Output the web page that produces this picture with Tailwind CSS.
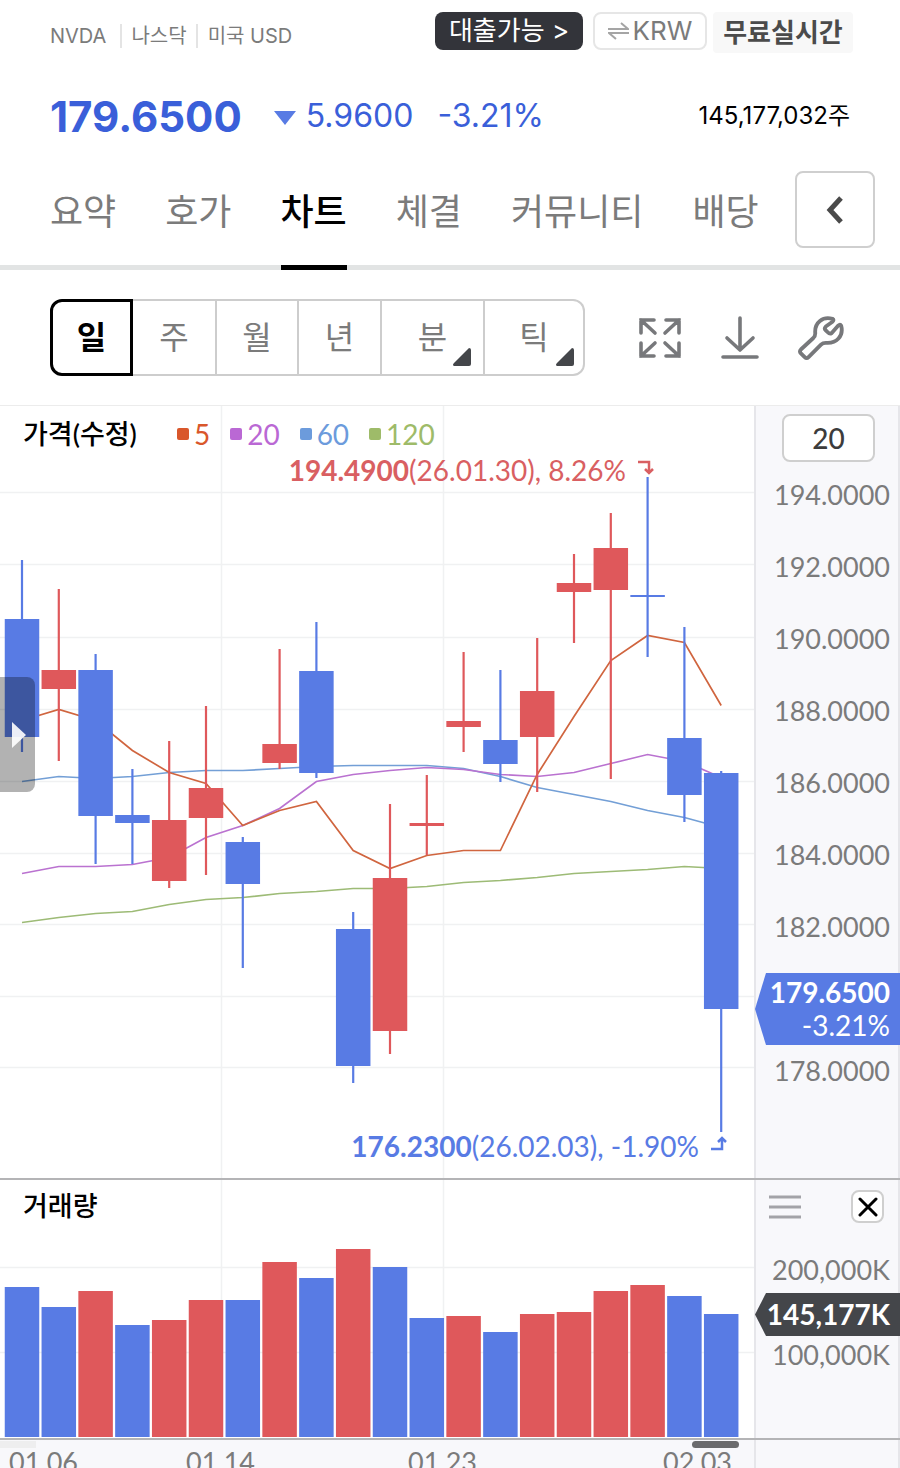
<!DOCTYPE html>
<html lang="ko">
<head>
    <meta charset="UTF-8">
    <meta name="viewport" content="width=device-width, initial-scale=1.0">
    <title>NVDA 차트</title>
    <script src="https://cdn.jsdelivr.net/npm/@tailwindcss/browser@4"></script>
</head>
<body class="bg-white font-['Inter','Noto_Sans_CJK_KR',sans-serif] text-black">
    <header class="pl-[50px] pr-[47px] pt-3">
        <div class="flex items-start justify-between">
            <div class="flex h-12 items-center text-[20px] leading-6 text-[#7b7b7b]">
                <span class="pr-[14px]">NVDA</span>
                <span class="border-l-2 border-[#e4e4e4] px-[9px]">나스닥</span>
                <span class="border-l-2 border-[#e4e4e4] pl-[10px]">미국 USD</span>
            </div>
            <div class="flex items-start">
                <button class="h-[38px] w-[148px] rounded-lg bg-[#33343a] text-[26px] leading-[38px] text-white">대출가능 &gt;</button>
                <button class="ml-[10px] flex h-[38px] w-[114px] items-center justify-center rounded-lg border-2 border-[#e6e6e6] text-[26px] leading-8 text-[#7b7b7b]">
                    <svg class="mr-1 h-[18px] w-[21px]" viewBox="0 0 21 18" fill="none" stroke="#a5a5a5" stroke-width="2">
                        <path d="M0 7h20L13 1M21 11H1l7 6"/>
                    </svg>KRW
                </button>
                <span class="ml-[6px] h-[41px] w-[140px] rounded bg-[#f8f8f8] text-center text-[26px] font-bold leading-[41px] text-[#4b4b4b]">무료실시간</span>
            </div>
        </div>
        <div class="mt-6 flex h-16 items-center text-[32px] text-[#3a5fd9]">
            <strong class="text-[42px] font-bold">179.6500</strong>
            <svg class="ml-[31px] mr-[9px] h-[18px] w-6" viewBox="0 0 24 18" fill="#587be4"><path d="M1 4h22L12 18z"/></svg>
            <span>5.9600</span>
            <span class="ml-6">-3.21%</span>
            <span class="ml-auto pr-[3px] text-[24px] text-black">145,177,032주</span>
        </div>
    </header>

    <nav class="flex h-[122px] border-b-[5px] border-[#e2e4e4] pl-[50px] pr-[25px] pt-[23px] text-[36px] leading-[83px] text-[#7b7b7b]">
        <div class="flex gap-[49px] whitespace-nowrap">
            <a href="#">요약</a>
            <a href="#">호가</a>
            <a href="#" class="h-[99px] border-b-[5px] border-black font-medium text-black">차트</a>
            <a href="#">체결</a>
            <a href="#">커뮤니티</a>
            <a href="#">배당</a>
        </div>
        <button aria-label="이전" class="ml-auto flex h-[77px] w-20 items-center justify-center rounded-lg border-2 border-[#cfcfcf]">
            <svg class="h-7 w-5" viewBox="0 0 20 28" fill="none" stroke="#4a4a4a" stroke-width="5"><path d="M16 2L5 14l11 12"/></svg>
        </button>
    </nav>

    <div class="flex h-[135px] items-start pl-[50px] pr-[56px] pt-[29px]">
        <div class="flex h-[77px] text-[32px] leading-[72px] text-[#7b7b7b]">
            <button class="w-[83px] rounded-l-xl border-3 border-black font-bold text-black">일</button>
            <button class="w-[84px] border-y-2 border-r-2 border-[#cdcdcd]">주</button>
            <button class="w-[82px] border-y-2 border-r-2 border-[#cdcdcd]">월</button>
            <button class="w-[83px] border-y-2 border-r-2 border-[#cdcdcd]">년</button>
            <button class="relative w-[103px] border-y-2 border-r-2 border-[#cdcdcd]">분
                <svg class="absolute bottom-2 right-3 h-[18px] w-[18px]" viewBox="0 0 18 18" fill="#44464a"><path d="M16 0q2 0 2 2v14q0 2-2 2H1q-2-1 0-3z"/></svg>
            </button>
            <button class="relative w-[100px] rounded-r-xl border-y-2 border-r-2 border-[#cdcdcd]">틱
                <svg class="absolute bottom-2 right-[9px] h-[18px] w-[18px]" viewBox="0 0 18 18" fill="#44464a"><path d="M16 0q2 0 2 2v14q0 2-2 2H1q-2-1 0-3z"/></svg>
            </button>
        </div>
        <div class="ml-auto flex h-[77px] items-center gap-9">
            <button aria-label="전체화면">
                <svg class="h-11 w-11" viewBox="0 0 44 44" fill="none" stroke="#77787b" stroke-width="3.6" stroke-linecap="round" stroke-linejoin="miter">
                    <path d="M16 4H3v13M3 4l14 13M28 4h13v13M41 4L27 17M3 27v13h13M3 40l14-13M41 27v13H28M41 40L27 27"/>
                </svg>
            </button>
            <button aria-label="저장">
                <svg class="h-11 w-11" viewBox="0 0 44 44" fill="none" stroke="#77787b" stroke-width="3.6" stroke-linecap="round" stroke-linejoin="round">
                    <path d="M22 2v32M9 22l13 12 13-12M5 41h34"/>
                </svg>
            </button>
            <button aria-label="설정">
                <svg class="h-[46px] w-[46px]" viewBox="0 0 48 48" fill="none" stroke="#77787b" stroke-width="4" stroke-linejoin="round">
                    <path d="M36 4C26 1 17 8 18 19q0 3-2 5L3 36q-2 2 0 4l4 4q2 2 4 0l13-13q2-2 5-2c11 1 19-7 16-18q-1-2-3 0l-7 8q-2 1-4-1l-2-2q-2-2 0-4l7-5q2-2 0-3z"/>
                </svg>
            </button>
        </div>
    </div>

    <main class="font-['Lato','Noto_Sans_CJK_KR',sans-serif] text-[28px] leading-7">
        <section class="flex h-[775px] border-b-2 border-t border-b-[#b4b4b6] border-t-[#ececec]">
            <div class="relative min-w-0 flex-1">
                <svg id="priceChart" class="absolute inset-0 h-full w-full" viewBox="0 406 754 772" preserveAspectRatio="none" fill="none"></svg>
                <div class="relative flex items-center pl-[23px] pt-[14px]">
                    <h2 class="mr-10 text-[27px] font-medium">가격(수정)</h2>
                    <ul class="flex gap-5">
                        <li class="flex items-center gap-[5px] text-[#d9572b]"><i class="h-3 w-3 rounded-xs bg-[#d9572b]"></i>5</li>
                        <li class="flex items-center gap-[5px] text-[#ba68d4]"><i class="h-3 w-3 rounded-xs bg-[#ba68d4]"></i>20</li>
                        <li class="flex items-center gap-[5px] text-[#6c9bdc]"><i class="h-3 w-3 rounded-xs bg-[#6c9bdc]"></i>60</li>
                        <li class="flex items-center gap-[5px] text-[#9ebb69]"><i class="h-3 w-3 rounded-xs bg-[#9ebb69]"></i>120</li>
                    </ul>
                </div>
                <p class="absolute right-[100px] top-[50px] flex whitespace-nowrap text-[#d95f62]">
                    <b>194.4900</b>(26.01.30), 8.26%
                    <svg class="ml-3 mt-1 h-4 w-4" viewBox="0 0 16 16" fill="none" stroke="#d95f62" stroke-width="2.5"><path d="M0 2h11v11M7 9l4 4 4-4"/></svg>
                </p>
                <p class="absolute bottom-[18px] right-[27px] flex whitespace-nowrap text-[#587be4]">
                    <b>176.2300</b>(26.02.03), -1.90%
                    <svg class="ml-3 mt-1 h-4 w-4" viewBox="0 0 16 16" fill="none" stroke="#587be4" stroke-width="2.5"><path d="M0 13h11V2M7 6l4-4 4 4"/></svg>
                </p>
                <button aria-label="펼치기" class="absolute left-0 top-[271px] flex h-[115px] w-[35px] items-center rounded-r-lg bg-black/30 pl-3">
                    <svg class="h-[26px] w-[14px]" viewBox="0 0 14 26" fill="#fff" fill-opacity=".9"><path d="M0 0l14 13L0 26z"/></svg>
                </button>
            </div>
            <div class="w-[146px] border-x-2 border-[#e6e6ea] bg-[#f8f8fb] pr-2 pt-2 text-right text-[#7b7b7b]">
                <button class="mr-[15px] h-12 w-[93px] rounded-lg border-2 border-[#cfcfcf] bg-white font-medium text-[#3c3c3c]">20</button>
                <ul class="mt-[19px] flex flex-col gap-11 text-[27px]">
                    <li>194.0000</li>
                    <li>192.0000</li>
                    <li>190.0000</li>
                    <li>188.0000</li>
                    <li>186.0000</li>
                    <li>184.0000</li>
                    <li>182.0000</li>
                    <li class="relative h-7">
                        <div class="absolute -right-[10px] -top-3 h-[72px] w-[145px] bg-[#587be4] pr-[10px] pt-[3px] text-[28px] leading-[33px] text-white [clip-path:polygon(0_50%,11px_0,100%_0,100%_100%,11px_100%)]">
                            <b>179.6500</b><br>-3.21%
                        </div>
                    </li>
                    <li>178.0000</li>
                </ul>
            </div>
        </section>

        <section class="flex h-[260px] border-b-2 border-[#b4b4b6]">
            <div class="relative min-w-0 flex-1">
                <svg id="volumeChart" class="absolute inset-0 h-full w-full" viewBox="0 1180 754 258" preserveAspectRatio="none"></svg>
                <h2 class="relative pl-[23px] pt-3 text-[27px] font-medium">거래량</h2>
            </div>
            <div class="w-[146px] border-x-2 border-[#e6e6ea] bg-[#f8f8fb] pr-2 pt-[10px] text-right text-[27px] text-[#7b7b7b]">
                <div class="flex items-center justify-between pl-[13px] pr-[6px]">
                    <button aria-label="메뉴"><svg class="h-6 w-8" viewBox="0 0 32 24" stroke="#a3a3a8" stroke-width="3"><path d="M0 2h32M0 12h32M0 22h32"/></svg></button>
                    <button aria-label="닫기" class="flex h-[33px] w-[33px] items-center justify-center rounded-lg border-2 border-[#cfcfcf] bg-white">
                        <svg class="h-5 w-5" viewBox="0 0 20 20" stroke="#000" stroke-width="3" stroke-linecap="round"><path d="M2 2l16 16M18 2L2 18"/></svg>
                    </button>
                </div>
                <p class="mt-[33px]">200,000K</p>
                <div class="relative h-[57px]">
                    <b class="absolute -right-[10px] top-[9px] h-[43px] w-[145px] bg-[#44464a] pr-[10px] text-[28px] leading-[42px] text-white [clip-path:polygon(0_50%,11px_0,100%_0,100%_100%,11px_100%)]">145,177K</b>
                </div>
                <p>100,000K</p>
            </div>
        </section>

        <footer class="flex h-7 overflow-hidden bg-[#f8f8fb] text-[27px] text-[#7b7b7b]">
            <div class="relative grid min-w-0 flex-1 grid-cols-[177fr_222fr_255fr_91fr] pl-[9px] pt-2">
                <span class="absolute left-0 top-px h-[7px] w-9 bg-[#eeeeef]"></span>
                <span class="absolute right-[15px] top-px h-[7px] w-[47px] rounded-full bg-[#6b6b6d]"></span>
                <time>01.06</time>
                <time>01.14</time>
                <time>01.23</time>
                <time>02.03</time>
            </div>
            <div class="w-[146px] border-x-2 border-[#e6e6ea]"></div>
        </footer>
    </main>

    <script>
        const UP = '#df585b';
        const DOWN = '#587be4';
        const STEP = 36.8;
        const WIDTH = 34.5;
        const centerX = i => 22 + i * STEP;

        // high, body top, body bottom, low, color
        const candles = [
            [560, 619, 737, 752, DOWN], [589, 670, 689, 761, UP], [654, 670, 816, 864, DOWN], [769, 815, 823, 864, DOWN],
            [741, 820, 881, 888, UP], [706, 788, 818, 875, UP], [837, 842, 884, 968, DOWN], [649, 744, 763, 769, UP],
            [622, 671, 773, 778, DOWN], [912, 929, 1066, 1083, DOWN], [804, 878, 1031, 1054, UP], [775, 823, 826, 855, UP],
            [652, 721, 727, 752, UP], [670, 740, 764, 782, DOWN], [638, 691, 737, 792, UP], [554, 583, 592, 643, UP],
            [513, 548, 590, 779, UP], [477, 595, 597, 657, DOWN], [627, 738, 795, 822, DOWN], [771, 773, 1009, 1132, DOWN]
        ];

        const averages = [
            ['#9dbb76', [922, 917, 913, 911, 904, 899, 897, 893, 891, 888, 888, 886, 882, 880, 877, 873, 871, 869, 866, 868]],
            ['#739fd6', [781, 776, 778, 776, 772, 770, 770, 768, 766, 765, 765, 765, 768, 776, 787, 794, 801, 810, 817, 827]],
            ['#ba72d0', [873, 866, 866, 864, 857, 837, 825, 808, 781, 774, 770, 767, 769, 774, 776, 772, 763, 754, 761, 777]],
            ['#d0653f', [720, 709, 720, 750, 772, 783, 825, 810, 801, 850, 868, 855, 850, 850, 774, 716, 660, 635, 642, 705]]
        ];

        const volumes = [
            [1287, DOWN], [1307, DOWN], [1291, UP], [1325, DOWN], [1320, UP], [1300, UP], [1300, DOWN], [1262, UP], [1278, DOWN], [1249, UP],
            [1267, DOWN], [1318, DOWN], [1316, UP], [1332, DOWN], [1314, UP], [1312, UP], [1291, UP], [1285, UP], [1296, DOWN], [1314, DOWN]
        ];

        function gridLines(rows, top, bottom) {
            const h = rows.map(y => `M0 ${y + .5}H755`).join('');
            const v = [221, 443].map(x => `M${x + .5} ${top}V${bottom}`).join('');
            return `<path d="${h}${v}" stroke="#f0f1f2" stroke-width="1.5"/>`;
        }

        function averageLine([color, ys]) {
            const points = ys.map((y, i) => `${centerX(i)},${y + .5}`).join(' ');
            return `<polyline points="${points}" stroke="${color}" stroke-width="1.7"/>`;
        }

        function candle([high, top, bottom, low, color], i) {
            const x = centerX(i);
            return `
                <path d="M${x} ${high}V${low}" stroke="${color}" stroke-width="2.2"/>
                <rect x="${x - WIDTH / 2}" y="${top}" width="${WIDTH}" height="${bottom - top}" fill="${color}"/>
            `;
        }

        function volumeBar([top, color], i) {
            return `<rect x="${centerX(i) - WIDTH / 2}" y="${top}" width="${WIDTH}" height="${1437 - top}" fill="${color}"/>`;
        }

        document.getElementById('priceChart').innerHTML =
            gridLines([492, 564, 637, 709, 781, 853, 924, 996, 1067], 405, 1178) +
            averages.map(averageLine).join('') +
            candles.map(candle).join('');

        document.getElementById('volumeChart').innerHTML =
            gridLines([1267, 1352], 1180, 1438) +
            volumes.map(volumeBar).join('');
    </script>
</body>
</html>
